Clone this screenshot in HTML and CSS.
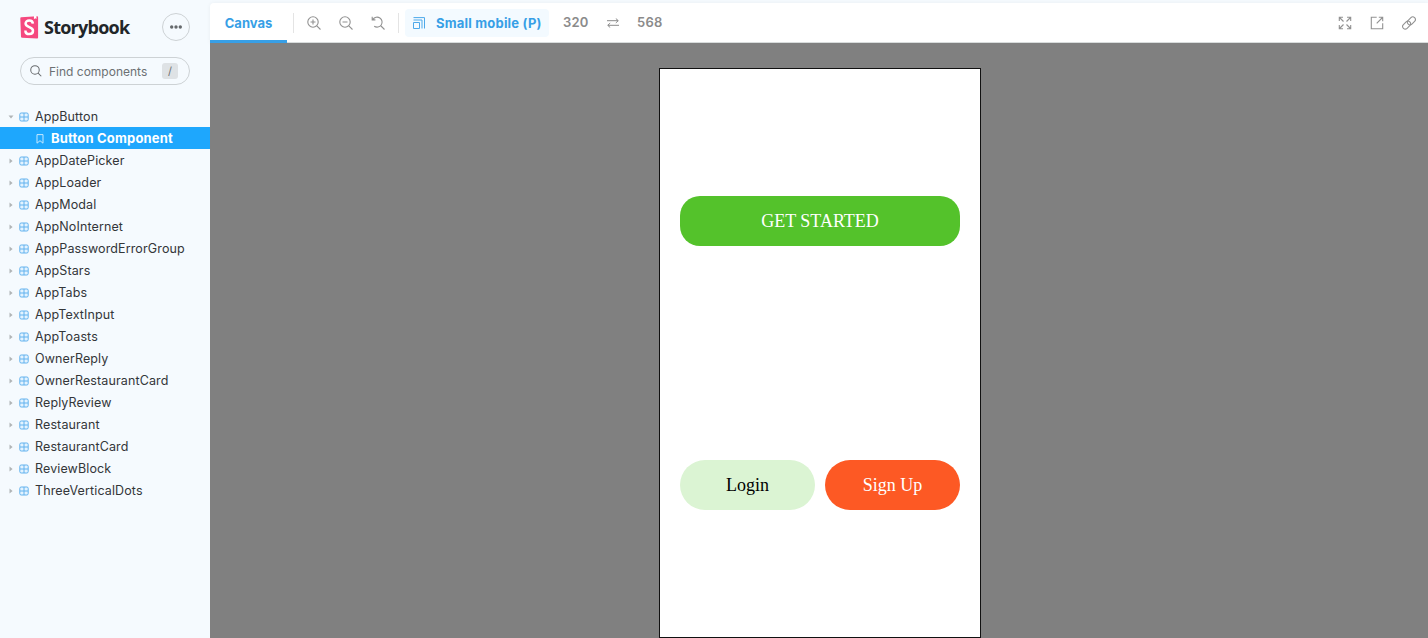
FILE: index.html
```html
<!DOCTYPE html>
<html lang="en">
<head>
<meta charset="utf-8">
<title>Storybook</title>
<link rel="stylesheet" href="styles.css">
</head>
<body>
<svg class="sprite" width="0" height="0">
  <symbol id="component" viewBox="0 0 10 10"><rect x=".8" y="1" width="8.4" height="8" rx="1.4" fill="#e3f3ff" stroke="#62b2ee"/><path d="M5 1v8M1 5h8" stroke="#62b2ee"/></symbol>
  <symbol id="caret" viewBox="0 0 4 6"><path d="M.5 .5L3.6 3 .5 5.5z" fill="#b0b4b6"/></symbol>
</svg>
<div class="app">
  <aside class="sidebar">
    <header class="brand">
      <svg class="logo" width="19" height="23" viewBox="0 0 19 23"><path d="M.3 2.2Q.3 1.3 1.2 1.2L17 .2Q18.1.1 18.1 1.4V21.5Q18.1 22.5 17.1 22.4L2.2 21.8Q1 21.7 1 20.7z" fill="#f5487f"/><path d="M14 0l2.4-.1.1 3.2-1.2-.9-1.4 1z" fill="#fff"/><path d="M12.9 7.7C12.7 5.5 11.4 4.5 9.3 4.5 7 4.5 5.6 5.7 5.6 7.6c0 4.2 7.4 2.9 7.4 7.1 0 2-1.3 3.4-3.7 3.4-2.5 0-3.9-1.3-3.9-3.7" fill="none" stroke="#fff" stroke-width="2.5"/></svg>
      <span class="wordmark">Storybook</span>
      <button class="menu"><svg width="14" height="4" viewBox="0 0 14 4" fill="#65696c"><circle cx="2.7" cy="2" r="1.7"/><circle cx="7" cy="2" r="1.7"/><circle cx="11.3" cy="2" r="1.7"/></svg></button>
    </header>
    <div class="search">
      <svg width="12" height="12" viewBox="0 0 13 13" fill="none" stroke="#66696c" stroke-width="1.1"><circle cx="5.4" cy="5.4" r="4.6"/><path d="M8.8 8.8l3.4 3.4"/></svg>
      <span>Find components</span><kbd>/</kbd>
    </div>
    <nav class="tree">
      <a class="open"><svg class="caret"><use href="#caret"/></svg><svg class="comp"><use href="#component"/></svg>AppButton</a>
      <a class="story"><svg width="8" height="10" viewBox="0 0 8 10"><path d="M1 .6h6v8.6L4 6.7 1 9.2z" fill="none" stroke="#c5e8ff"/></svg>Button Component</a>
      <a><svg class="caret"><use href="#caret"/></svg><svg class="comp"><use href="#component"/></svg>AppDatePicker</a>
      <a><svg class="caret"><use href="#caret"/></svg><svg class="comp"><use href="#component"/></svg>AppLoader</a>
      <a><svg class="caret"><use href="#caret"/></svg><svg class="comp"><use href="#component"/></svg>AppModal</a>
      <a><svg class="caret"><use href="#caret"/></svg><svg class="comp"><use href="#component"/></svg>AppNoInternet</a>
      <a><svg class="caret"><use href="#caret"/></svg><svg class="comp"><use href="#component"/></svg>AppPasswordErrorGroup</a>
      <a><svg class="caret"><use href="#caret"/></svg><svg class="comp"><use href="#component"/></svg>AppStars</a>
      <a><svg class="caret"><use href="#caret"/></svg><svg class="comp"><use href="#component"/></svg>AppTabs</a>
      <a><svg class="caret"><use href="#caret"/></svg><svg class="comp"><use href="#component"/></svg>AppTextInput</a>
      <a><svg class="caret"><use href="#caret"/></svg><svg class="comp"><use href="#component"/></svg>AppToasts</a>
      <a><svg class="caret"><use href="#caret"/></svg><svg class="comp"><use href="#component"/></svg>OwnerReply</a>
      <a><svg class="caret"><use href="#caret"/></svg><svg class="comp"><use href="#component"/></svg>OwnerRestaurantCard</a>
      <a><svg class="caret"><use href="#caret"/></svg><svg class="comp"><use href="#component"/></svg>ReplyReview</a>
      <a><svg class="caret"><use href="#caret"/></svg><svg class="comp"><use href="#component"/></svg>Restaurant</a>
      <a><svg class="caret"><use href="#caret"/></svg><svg class="comp"><use href="#component"/></svg>RestaurantCard</a>
      <a><svg class="caret"><use href="#caret"/></svg><svg class="comp"><use href="#component"/></svg>ReviewBlock</a>
      <a><svg class="caret"><use href="#caret"/></svg><svg class="comp"><use href="#component"/></svg>ThreeVerticalDots</a>
    </nav>
  </aside>
  <main class="main">
    <div class="toolbar">
      <div class="tab">Canvas</div>
      <i class="sep"></i>
      <div class="zooms">
        <svg class="tool" viewBox="0 0 14 14"><circle cx="6" cy="6" r="5.2"/><path d="M9.8 9.8l3.7 3.7M6 3.5v5M3.5 6h5"/></svg>
        <svg class="tool" viewBox="0 0 14 14"><circle cx="6" cy="6" r="5.2"/><path d="M9.8 9.8l3.7 3.7M3.5 6h5"/></svg>
        <svg class="tool" viewBox="0 0 14 14"><path d="M1.9 3.4A5 5 0 1 1 3.2 10.2M10 10l3.5 3.5M1.2 .8v3.1h3.2"/></svg>
      </div>
      <i class="sep"></i>
      <div class="viewport"><svg width="12" height="12" viewBox="0 0 12 12" fill="none" stroke="#4da9ea"><path d="M.5 5.5h6v6h-6zM.5 3h8.5v8.5M.5.6h11v10.9"/></svg>Small mobile (P)</div>
      <span class="dim">320</span>
      <svg class="swap" width="12" height="10" viewBox="0 0 12 10"><path d="M0 2.7h11M8.8.5L11.3 2.7 8.8 4.9M12 7.3H1M3.2 5.1L.7 7.3l2.5 2.2"/></svg>
      <span class="dim">568</span>
      <div class="actions">
        <svg class="tool" viewBox="0 0 14 14"><path d="M1.3 5V1.3H5M1.5 1.5l4 4M9 1.3h3.7V5M12.5 1.5l-4 4M1.3 9v3.7H5M1.5 12.5l4-4M12.7 9v3.7H9M12.5 12.5l-4-4"/></svg>
        <svg class="tool" viewBox="0 0 14 14"><path d="M6.7 1.3H1.3v11.4h11.4V7.3M8.8 1.3h3.9v3.9M12.5 1.5L6.7 7.3"/></svg>
        <svg class="tool" viewBox="0 0 14 14"><g transform="rotate(-45 7 7)"><rect x="-.7" y="4.2" width="9" height="5.2" rx="2.6"/><rect x="5.7" y="4.6" width="9" height="5.2" rx="2.6"/></g></svg>
      </div>
    </div>
    <div class="canvas">
      <div class="phone">
        <button class="cta">GET STARTED</button>
        <div class="pair"><button class="login">Login</button><button class="signup">Sign Up</button></div>
      </div>
    </div>
  </main>
</div>
</body>
</html>
```
FILE: styles.css
```css
* { box-sizing: border-box; }
body { margin: 0; overflow: hidden; font-family: Inter, sans-serif; }
button { padding: 0; border: 0; font-family: inherit; }
svg { flex: none; }
.sprite { display: none; }
.app { display: flex; width: 1428px; height: 638px; background: #f5fafe; }
.sidebar { width: 210px; flex: none; }
.brand { display: flex; align-items: center; height: 28px; margin: 13px 20px 0; }
.wordmark { margin-left: 5px; font: 700 18px/28px "Open Sans", sans-serif; letter-spacing: -.75px; color: #222629; }
.menu { display: flex; align-items: center; justify-content: center; width: 28px; height: 28px; margin-left: auto; border: 1px solid #cdd2d5; border-radius: 50%; background: none; }
.search { display: flex; align-items: center; width: 170px; height: 28px; margin: 16px 20px 0; padding: 0 11px 0 9px; border: 1px solid #cdd2d5; border-radius: 14px; font-size: 12px; color: #6c7073; }
.search span { margin: 1px 0 0 7px; }
.search kbd { width: 16px; height: 16px; margin-left: auto; border-radius: 3px; background: #dee2e5; font: 11px/16px Inter, sans-serif; text-align: center; }
.tree { margin-top: 20px; }
.tree a { display: flex; align-items: center; height: 22px; padding-left: 9px; font-size: 12.5px; letter-spacing: .12px; color: #333639; white-space: nowrap; }
.caret { width: 4px; height: 6px; margin-top: 2px; }
.open .caret { transform: rotate(90deg); }
.comp { width: 10px; height: 10px; margin: 2px 6px 0; }
.tree .story { padding-left: 36px; gap: 7px; background: #1ea7fd; color: #fff; font-size: 13px; font-weight: 700; letter-spacing: .18px; }
.story svg { margin-top: 2px; }
.main { flex: 1; display: flex; flex-direction: column; }
.toolbar { display: flex; align-items: center; height: 40px; margin-top: 3px; border-bottom: 1px solid #d8dcdc; border-radius: 4px 0 0; background: #fff; box-shadow: 0 0 4px #0000000d; font-size: 13px; font-weight: 700; }
.tab { width: 77px; height: 40px; align-self: flex-start; border-bottom: 3px solid #379fe6; color: #379fe6; line-height: 41px; text-align: center; }
.sep { width: 1px; height: 20px; margin-left: 6px; background: #e4e4e4; }
.zooms { display: flex; gap: 18px; margin: 0 13px; }
.tool { width: 14px; height: 14px; fill: none; stroke: #929292; stroke-width: 1.1; }
.zooms + .sep { margin-left: 0; }
.viewport { display: flex; align-items: center; gap: 11px; width: 144px; height: 28px; margin-left: 6px; padding-left: 8px; border-radius: 4px; background: #f3faff; color: #379fe6; letter-spacing: .2px; white-space: nowrap; }
.dim { width: 26px; margin: -1px 0 0 14px; color: #8b8b8b; font-weight: 600; letter-spacing: .2px; }
.swap { margin: 0 4px 0 18px; fill: none; stroke: #8b8b8b; }
.actions { display: flex; gap: 18px; margin: 0 12px 0 auto; }
.canvas { flex: 1; padding: 25px 0 0 449px; background: #808080; }
.phone { width: 322px; height: 570px; padding: 127px 20px 0; border: 1px solid #111; background: #fff; }
.phone button { height: 50px; font: 18px/50px "Liberation Serif", serif; color: #fff; }
.phone .cta { display: block; width: 280px; border-radius: 20px; background: #54c22b; }
.pair { display: grid; grid-template-columns: 135px 135px; gap: 10px; margin-top: 214px; }
.pair button { border-radius: 25px; }
.phone .login { background: #dbf4d3; color: #000; }
.signup { background: #fd5924; }
```
